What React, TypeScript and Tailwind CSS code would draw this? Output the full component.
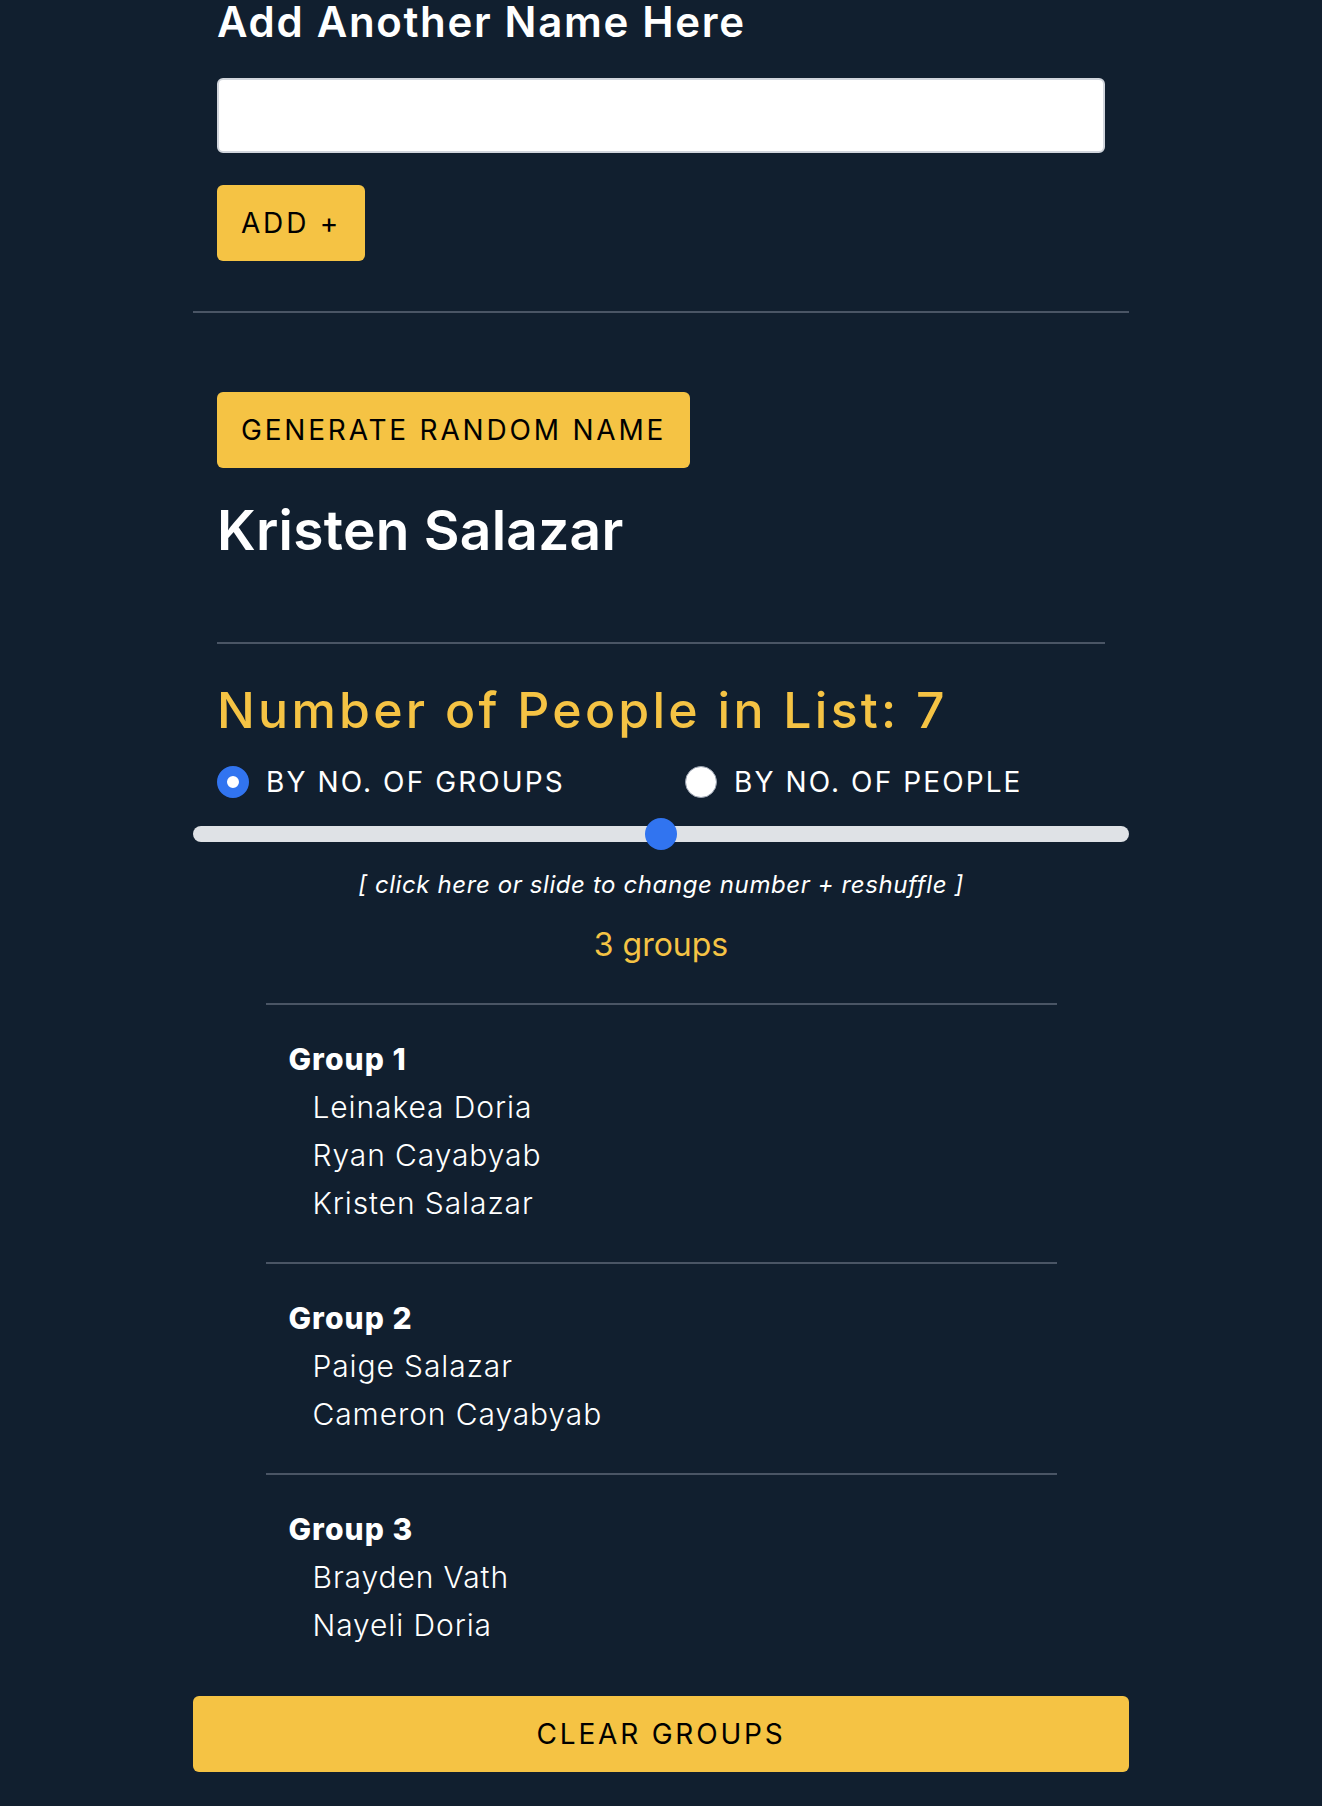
const groups = [
  { title: "Group 1", names: ["Leinakea Doria", "Ryan Cayabyab", "Kristen Salazar"] },
  { title: "Group 2", names: ["Paige Salazar", "Cameron Cayabyab"] },
  { title: "Group 3", names: ["Brayden Vath", "Nayeli Doria"] },
]

function Radio({ checked, label }: { checked: boolean; label: string }) {
  return (
    <label className="flex items-center gap-[17px]">
      {checked ? (
        <span className="h-8 w-8 rounded-full border-[10px] border-[#3174f0] bg-white" />
      ) : (
        <span className="h-8 w-8 rounded-full border border-gray-400 bg-white" />
      )}
      <span className="text-[28px] leading-8 tracking-[0.075em] text-white">{label}</span>
    </label>
  )
}

export default function App() {
  return (
    <div className="min-h-screen bg-[#111f2f] font-['Inter',sans-serif] pb-[35px]">
      <div className="mx-auto w-[936px]">
        <div className="px-6">
          <h2 className="text-[42px] font-semibold leading-[44px] tracking-[0.04em] text-white">Add Another Name Here</h2>
          <input type="text" className="mt-[34px] block h-[75px] w-full rounded-md border-2 border-gray-300 bg-white" />
          <button className="mt-8 h-[76px] rounded-md bg-[#f5c344] px-6 text-[28px] tracking-[0.1em] text-black">ADD +</button>
        </div>
        <hr className="mt-[50px] border-t-2 border-gray-600" />

        <div className="px-6">
          <button className="mt-[79px] h-[76px] rounded-md bg-[#f5c344] px-6 text-[28px] tracking-[0.1em] text-black">
            GENERATE RANDOM NAME
          </button>
          <h2 className="mt-[30px] text-[55px] font-semibold leading-[64px] tracking-[0.005em] text-white">Kristen Salazar</h2>
          <hr className="mt-[80px] border-t-2 border-gray-600" />
          <h3 className="mt-[36px] text-[50px] font-medium leading-[60px] tracking-[0.065em] text-[#f5c344]">
            Number of People in List: 7
          </h3>
          <div className="mt-[26px] grid grid-cols-[468px_auto]">
            <Radio checked label="BY NO. OF GROUPS" />
            <Radio checked={false} label="BY NO. OF PEOPLE" />
          </div>
        </div>

        <div className="relative mt-[28px] h-4 rounded-full bg-[#dfe2e6]">
          <span className="absolute left-1/2 top-1/2 h-8 w-8 -translate-x-1/2 -translate-y-1/2 rounded-full bg-[#3174f0]" />
        </div>
        <p className="mt-[27px] text-center text-[24px] italic leading-8 tracking-[0.025em] text-white">
          [ click here or slide to change number + reshuffle ]
        </p>
        <p className="mt-[24px] text-center text-[32px] leading-10 text-[#f5c344]">3 groups</p>

        <div className="mx-auto mt-[38px] w-[791px]">
          {groups.map((g) => (
            <div key={g.title} className="border-t-2 border-gray-600 pb-[35px] pl-[23px] pt-[30px]">
              <div className="text-[30px] font-extrabold leading-[48px] tracking-[0.035em] text-white">{g.title}</div>
              {g.names.map((n) => (
                <div key={n} className="pl-6 text-[30px] font-light leading-[48px] tracking-[0.03em] text-white">
                  {n}
                </div>
              ))}
            </div>
          ))}
        </div>

        <button className="mt-[12px] block h-[76px] w-full rounded-md bg-[#f5c344] text-[28px] tracking-[0.1em] text-black">
          CLEAR GROUPS
        </button>
      </div>
    </div>
  )
}
